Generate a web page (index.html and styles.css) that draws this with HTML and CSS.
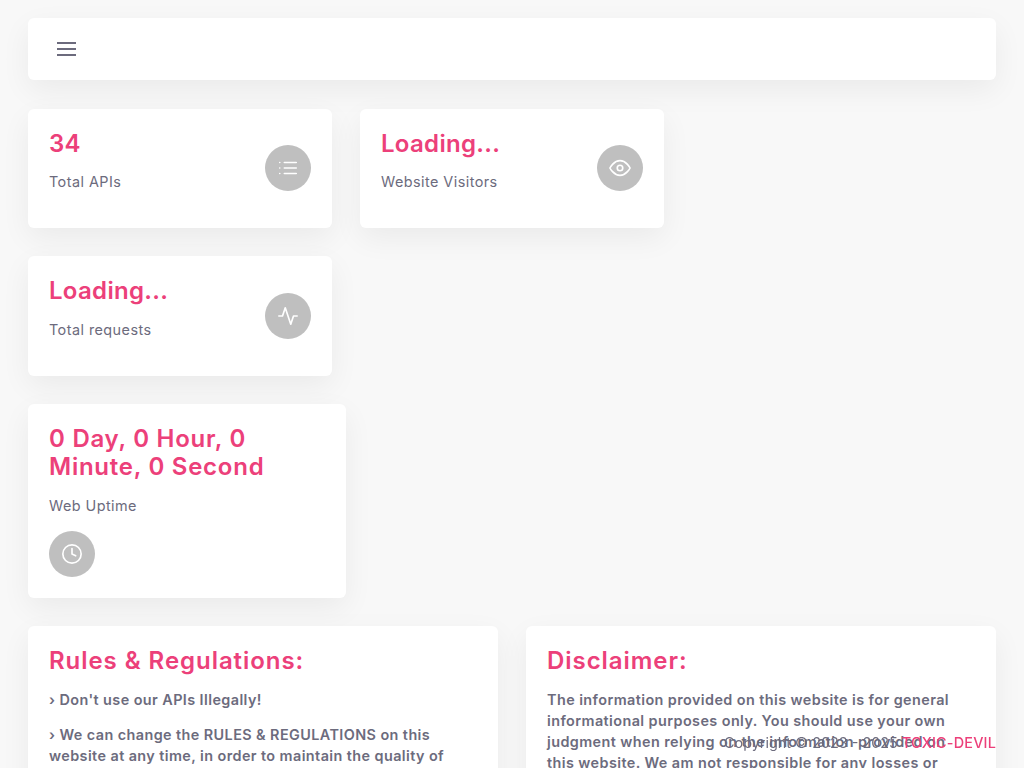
FILE: index.html
```html
<!DOCTYPE html>
<html lang="en">
<head>
  <meta charset="UTF-8">
  <title>API Dashboard</title>
  <link rel="stylesheet" href="styles.css">
</head>
<body>

<div class="page">
  <header class="topbar">
    <svg class="menu-icon" viewBox="0 0 24 24"><path d="M2 6h19M2 12h19M2 18h19"/></svg>
  </header>

  <div class="stat-row">
    <div class="card stat">
      <div class="stat-text">
        <h3 class="stat-value">34</h3>
        <p class="stat-label">Total APIs</p>
      </div>
      <span class="stat-icon">
        <svg viewBox="0 0 24 24"><path d="M8 6h13M8 12h13M8 18h13M3 6h.01M3 12h.01M3 18h.01"/></svg>
      </span>
    </div>
    <div class="card stat">
      <div class="stat-text">
        <h3 class="stat-value">Loading...</h3>
        <p class="stat-label">Website Visitors</p>
      </div>
      <span class="stat-icon">
        <svg viewBox="0 0 24 24"><path d="M1 12s4-8 11-8 11 8 11 8-4 8-11 8-11-8-11-8z"/><circle cx="12" cy="12" r="3"/></svg>
      </span>
    </div>
  </div>

  <div class="stat-row">
    <div class="card stat stat-tall">
      <div class="stat-text">
        <h3 class="stat-value">Loading...</h3>
        <p class="stat-label">Total requests</p>
      </div>
      <span class="stat-icon">
        <svg viewBox="0 0 24 24"><path d="M22 12h-4l-3 9L9 3l-3 9H2"/></svg>
      </span>
    </div>
  </div>

  <div class="stat-row">
    <div class="card uptime">
      <h3 class="stat-value">0 Day, 0 Hour, 0 Minute, 0 Second</h3>
      <p class="stat-label">Web Uptime</p>
      <span class="stat-icon">
        <svg viewBox="0 0 24 24"><circle cx="12" cy="12" r="10"/><path d="M12 6v6l4 2"/></svg>
      </span>
    </div>
  </div>

  <div class="info-row">
    <section class="card info">
      <h3 class="info-title">Rules &amp; Regulations:</h3>
      <p>› Don't use our APIs Illegally!</p>
      <p>› We can change the RULES &amp; REGULATIONS on this website at any time, in order to maintain the quality of our services.</p>
    </section>
    <section class="card info">
      <h3 class="info-title">Disclaimer:</h3>
      <p>The information provided on this website is for general informational purposes only. You should use your own judgment when relying on the information provided on this website. We am not responsible for any losses or damages.</p>
    </section>
  </div>
</div>

<footer class="copyright">Copyright © 2023 - 2025 <span class="brand">TOXIC-DEVIL</span></footer>

</body>
</html>
```

FILE: styles.css
```css
body {
  font-family: Inter, "Open Sans", sans-serif;
  background: #f8f8f8;
  color: #6c6b7d;
  margin: 0;
}

.page {
  padding: 18px 28px 60px;
}

.card {
  background: #ffffff;
  border-radius: 6px;
  box-shadow: 0 10px 30px rgba(0, 0, 0, 0.06);
}

.topbar {
  height: 62px;
  background: #ffffff;
  border-radius: 6px;
  box-shadow: 0 10px 30px rgba(0, 0, 0, 0.06);
  display: flex;
  align-items: center;
  padding-left: 27px;
  margin-bottom: 29px;
}

.menu-icon {
  width: 24px;
  height: 24px;
  fill: none;
  stroke: #6c6b7d;
  stroke-width: 2;
}

.stat-row {
  display: flex;
  gap: 28px;
  margin-bottom: 28px;
}

.stat {
  width: 304px;
  height: 119px;
  box-sizing: border-box;
  padding: 21px;
  display: flex;
  justify-content: space-between;
  align-items: flex-start;
}

.stat-tall {
  height: 120px;
}

.stat-tall .stat-icon {
  margin-top: 16px;
}

.stat-tall .stat-label {
  margin-top: 14px;
}

.stat-value {
  font-size: 24px;
  line-height: 28px;
  font-weight: 600;
  letter-spacing: 0.3px;
  color: #ec407a;
  margin: 0;
}

.stat-label {
  font-size: 14.4px;
  line-height: 21px;
  letter-spacing: 0.45px;
  margin: 13px 0 0;
}

.stat-icon {
  width: 46px;
  height: 46px;
  margin-top: 15px;
  border-radius: 50%;
  background: #bfbfbf;
  display: flex;
  align-items: center;
  justify-content: center;
}

.stat-icon svg {
  width: 22px;
  height: 22px;
  fill: none;
  stroke: #ffffff;
  stroke-width: 1.8;
  stroke-linecap: round;
  stroke-linejoin: round;
}

.uptime {
  width: 318px;
  height: 194px;
  box-sizing: border-box;
  padding: 21px;
}

.uptime .stat-value {
  letter-spacing: 0.75px;
}

.uptime .stat-label {
  margin-top: 14px;
}

.uptime .stat-icon {
  margin-top: 15px;
}

.info-row {
  display: flex;
  gap: 28px;
}

.info {
  flex: 1;
  padding: 21px 34px 21px 21px;
}

.info-title {
  font-size: 24px;
  line-height: 28px;
  font-weight: 600;
  letter-spacing: 0.95px;
  color: #ec407a;
  margin: 0 0 14px;
}

.info p {
  font-size: 14.4px;
  line-height: 21px;
  font-weight: 600;
  letter-spacing: 0.42px;
  margin: 0 0 14px;
}

.copyright {
  position: fixed;
  right: 28px;
  bottom: 15px;
  font-size: 14.4px;
  line-height: 21px;
}

.brand {
  color: #ec407a;
  font-weight: 500;
  letter-spacing: 0.2px;
}
```
